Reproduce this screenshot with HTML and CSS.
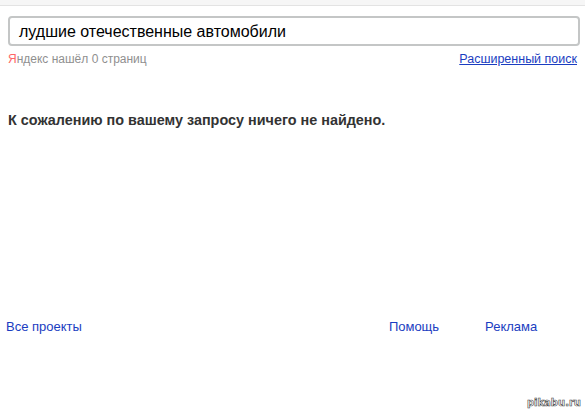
FILE: index.html
```html
<!DOCTYPE html>
<html lang="ru">
<head>
<meta charset="utf-8">
<title>Яндекс</title>
<link rel="stylesheet" href="styles.css">
</head>
<body>
<div class="topstrip"></div>
<div class="page">
  <div class="search">
    <div class="search-input">лудшие отечественные автомобили</div>
  </div>
  <div class="info">
    <span class="found"><span class="ya">Я</span>ндекс нашёл 0 страниц</span>
    <a class="advanced" href="#">Расширенный поиск</a>
  </div>
  <p class="notfound">К сожалению по вашему запросу ничего не найдено.</p>
</div>
<div class="footer">
  <a class="flink all" href="#">Все проекты</a>
  <div class="fright">
    <a class="flink" href="#">Помощь</a>
    <a class="flink" href="#">Реклама</a>
  </div>
</div>
<div class="watermark">pikabu.ru</div>
</body>
</html>
```

FILE: styles.css
```css
html, body {
  margin: 0;
  padding: 0;
  background: #fff;
  font-family: "Liberation Sans", Arial, sans-serif;
}
body {
  position: relative;
  height: 414px;
  overflow: hidden;
}
.topstrip {
  height: 5px;
  background: #f6f6f6;
  border-bottom: 1px solid #e3e3e3;
}
.page {
  padding: 0 5px 0 8px;
}
.search {
  margin-top: 10px;
}
.search-input {
  height: 26px;
  border: 2px solid #c4c6c6;
  border-radius: 4px;
  padding: 1px 8px 0 9px;
  box-sizing: content-box;
  height: 25px;
  font-size: 16px;
  line-height: 26px;
  color: #000;
}
.info {
  display: flex;
  justify-content: space-between;
  align-items: baseline;
  margin-top: 5px;
  padding-right: 3px;
  line-height: 16px;
}
.found {
  color: #8f8f8f;
  font-size: 12px;
}
.ya {
  color: #f66;
}
.advanced {
  color: #1a3dc1;
  text-decoration: underline;
  font-size: 12.5px;
}
.notfound {
  margin: 45px 0 0;
  font-size: 14.4px;
  font-weight: bold;
  color: #333;
  line-height: 16px;
}
.footer {
  display: flex;
  margin-top: 191px;
  padding-left: 6px;
  font-size: 13px;
  line-height: 16px;
}
.fright {
  display: flex;
  gap: 46px;
  margin-left: 307px;
}
.flink {
  color: #1a3dc1;
  text-decoration: none;
}
.watermark {
  position: absolute;
  right: 4px;
  bottom: 6px;
  font-family: "DejaVu Sans", sans-serif;
  font-size: 10px;
  color: #fff;
  -webkit-text-stroke: 0.6px #444;
  font-weight: bold;
}
```
